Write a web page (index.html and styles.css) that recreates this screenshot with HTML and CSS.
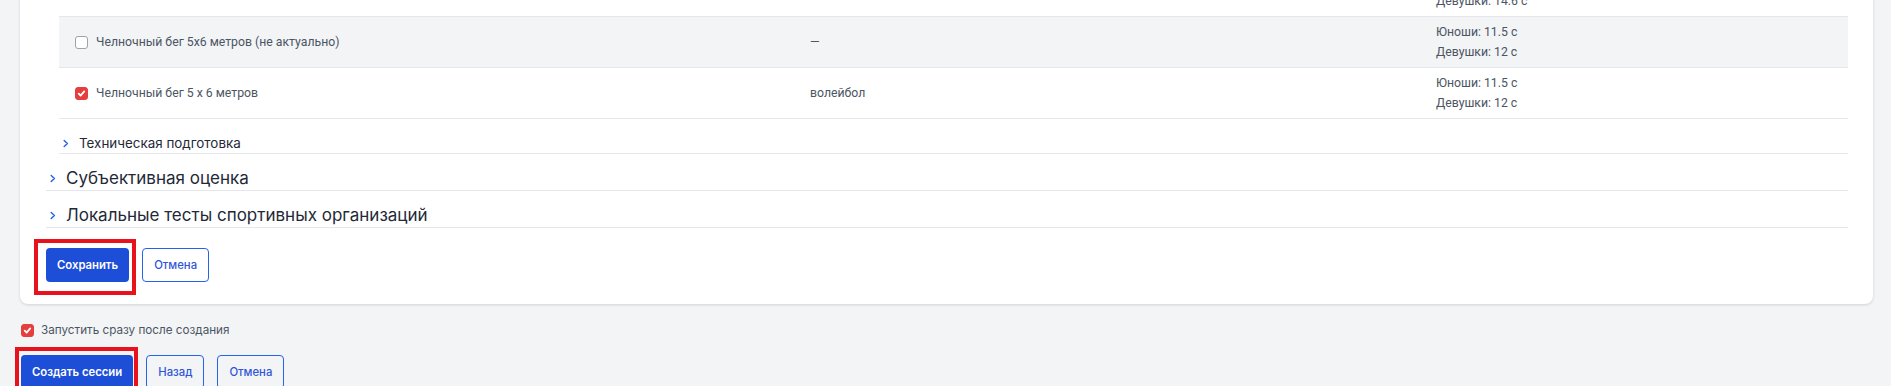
FILE: index.html
```html
<!DOCTYPE html>
<html lang="ru">
<head>
    <meta charset="UTF-8">
    <meta name="viewport" content="width=device-width, initial-scale=1.0">
    <title>Создание сессий</title>
    <link rel="stylesheet" href="styles.css">
</head>
<body>
    <div class="card">
        <div class="section-body">
            <div class="test-row">
                <div class="cell name"><span class="check"></span>Бег 100 метров</div>
                <div class="cell">—</div>
                <div class="cell norms">
                    <div>Юноши: 14.1 с</div>
                    <div>Девушки: 14.6 с</div>
                </div>
            </div>
            <div class="test-row muted">
                <div class="cell name"><span class="check"></span>Челночный бег 5х6 метров (не актуально)</div>
                <div class="cell">—</div>
                <div class="cell norms">
                    <div>Юноши: 11.5 с</div>
                    <div>Девушки: 12 с</div>
                </div>
            </div>
            <div class="test-row">
                <div class="cell name"><span class="check checked"><svg viewBox="0 0 12 12"><path d="M3 6.2l2 2 4-4.4" /></svg></span>Челночный бег 5 х 6 метров</div>
                <div class="cell">волейбол</div>
                <div class="cell norms">
                    <div>Юноши: 11.5 с</div>
                    <div>Девушки: 12 с</div>
                </div>
            </div>
            <div class="sub-header">
                <svg class="chevron" viewBox="0 0 6 8"><path d="M1.2 1l3.2 3-3.2 3" /></svg>
                Техническая подготовка
            </div>
        </div>
        <div class="section-header">
            <svg class="chevron" viewBox="0 0 6 8"><path d="M1.2 1l3.2 3-3.2 3" /></svg>
            Субъективная оценка
        </div>
        <div class="section-header">
            <svg class="chevron" viewBox="0 0 6 8"><path d="M1.2 1l3.2 3-3.2 3" /></svg>
            Локальные тесты спортивных организаций
        </div>
        <div class="actions">
            <span class="marked mark-save"><button class="btn primary">Сохранить</button></span>
            <button class="btn outline">Отмена</button>
        </div>
    </div>

    <div class="footer">
        <label class="start-now">
            <span class="check checked"><svg viewBox="0 0 12 12"><path d="M3 6.2l2 2 4-4.4" /></svg></span>
            Запустить сразу после создания
        </label>
        <div class="actions">
            <span class="marked mark-create"><button class="btn primary">Создать сессии</button></span>
            <button class="btn outline">Назад</button>
            <button class="btn outline">Отмена</button>
        </div>
    </div>
</body>
</html>
```

FILE: styles.css
```css
body {
    margin: 0;
    padding: 0 18px 0 20px;
    background-color: #f3f4f6;
    font-family: Inter, 'Noto Sans', sans-serif;
    color: #374151;
}
.card {
    margin-top: -34px;
    background-color: #fff;
    border-radius: 0 0 8px 8px;
    box-shadow: 0 1px 3px rgba(0, 0, 0, 0.14);
    padding: 0 25px 22px 26px;
}
.section-body {
    margin-left: 13px;
}
.test-row {
    display: grid;
    grid-template-columns: 735px 626px 1fr;
    border-bottom: 1px solid #e5e7eb;
    font-family: Roboto, 'Liberation Sans', sans-serif;
    font-size: 12.25px;
    color: #4b5563;
}
.test-row.muted {
    background-color: #f3f4f6;
}
.cell {
    display: flex;
    align-items: center;
    padding: 5px 16px;
    line-height: 20px;
}
.cell.norms {
    flex-direction: column;
    align-items: flex-start;
}
.name .check {
    margin-right: 8px;
}
.check {
    display: inline-flex;
    align-items: center;
    justify-content: center;
    box-sizing: border-box;
    width: 13px;
    height: 13px;
    border: 1px solid #9ca3af;
    border-radius: 3px;
    background-color: #fff;
}
.check.checked {
    border-color: #e53e3e;
    background-color: #e53e3e;
}
.check svg {
    width: 11px;
    height: 11px;
    fill: none;
    stroke: #fff;
    stroke-width: 2;
    stroke-linecap: round;
    stroke-linejoin: round;
}
.chevron {
    width: 6px;
    height: 9px;
    margin-right: 10px;
    fill: none;
    stroke: #2563eb;
    stroke-width: 1.5;
    stroke-linecap: round;
    stroke-linejoin: round;
}
.sub-header,
.section-header {
    display: flex;
    align-items: center;
    padding-left: 4px;
    border-bottom: 1px solid #e5e7eb;
}
.sub-header {
    padding-top: 15px;
    padding-bottom: 1px;
    line-height: 18px;
    font-size: 13.4px;
    font-weight: 400;
    color: #1f2937;
}
.section-header {
    padding-top: 12px;
    line-height: 24px;
    font-size: 17px;
    color: #1f2937;
}
.actions {
    display: flex;
    gap: 13px;
    margin-top: 20px;
}
.btn {
    height: 34px;
    padding: 0 11px;
    border-radius: 4px;
    font-family: Inter, 'Noto Sans', sans-serif;
    font-size: 11.3px;
    cursor: pointer;
}
.btn.primary {
    border: none;
    background-color: #1d4ed8;
    color: #fff;
    font-weight: 600;
}
.btn.outline {
    border: 1px solid #2563eb;
    background-color: transparent;
    color: #2f56d9;
    font-weight: 500;
}
.card .btn.outline {
    background-color: #fff;
}
.marked {
    position: relative;
    display: inline-flex;
}
.marked::after {
    content: "";
    position: absolute;
    border: 4px solid #e8121c;
    pointer-events: none;
}
.mark-save::after {
    top: -9px;
    right: -7px;
    bottom: -13px;
    left: -12px;
}
.mark-create::after {
    top: -8px;
    right: -5px;
    bottom: -8px;
    left: -6px;
}
.footer {
    padding-left: 1px;
}
.start-now {
    display: flex;
    align-items: center;
    gap: 7px;
    margin-top: 16px;
    line-height: 20px;
    font-size: 11.7px;
    color: #4b5563;
}
.footer .actions {
    margin-top: 15px;
}
```
